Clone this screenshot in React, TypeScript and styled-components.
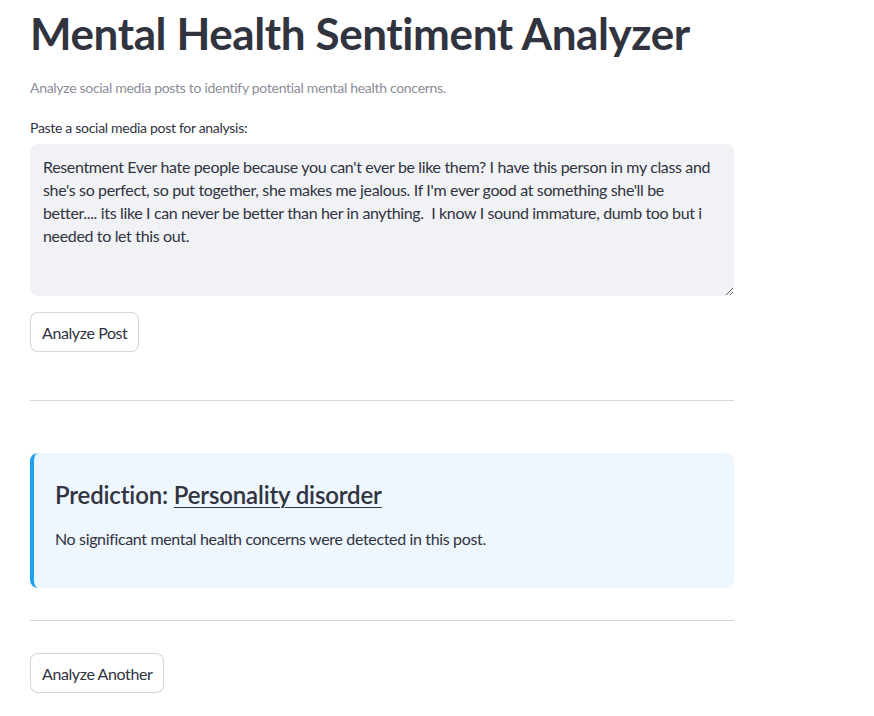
import React from "react";
import styled, { createGlobalStyle } from "styled-components";

const Global = createGlobalStyle`
  html, body { margin: 0; padding: 0; background: #ffffff; }
  body { font-family: Lato, "Noto Sans", sans-serif; color: #31333f; }
  * { box-sizing: border-box; }
`;

const Main = styled.main`
  width: 704px;
  margin-left: 30px;
  display: flex;
  flex-direction: column;
`;

const Title = styled.h1`
  margin: 0;
  padding: 7px 0 0;
  font-size: 44px;
  font-weight: 700;
  line-height: 52px;
  letter-spacing: -0.4px;
  color: #31333f;
`;

const Subtitle = styled.p`
  margin: 19px 0 0;
  font-size: 14px;
  line-height: 20px;
  letter-spacing: -0.3px;
  color: #8b8d97;
`;

const Label = styled.label`
  display: block;
  margin: 20px 0 0;
  font-size: 14px;
  line-height: 20px;
  letter-spacing: -0.3px;
  color: #31333f;
`;

const TextArea = styled.textarea`
  display: block;
  width: 704px;
  height: 152px;
  margin-top: 6px;
  padding: 11px 12px 12px 13px;
  border: none;
  border-radius: 8px;
  background: #f0f2f6;
  color: #31333f;
  font-family: Lato, "Noto Sans", sans-serif;
  font-size: 16px;
  line-height: 23px;
  letter-spacing: -0.35px;
  white-space: pre-wrap;
  resize: vertical;
  outline: none;
`;

const Button = styled.button<{ $top: number }>`
  align-self: flex-start;
  margin-top: ${(p) => p.$top}px;
  height: 40px;
  padding: 0 11px;
  background: #ffffff;
  border: 1px solid rgba(49, 51, 63, 0.2);
  border-radius: 8px;
  font-family: Lato, "Noto Sans", sans-serif;
  font-size: 16px;
  letter-spacing: -0.4px;
  color: #31333f;
  cursor: pointer;
`;

const Divider = styled.hr<{ $top: number }>`
  width: 100%;
  margin: ${(p) => p.$top}px 0 0;
  border: none;
  border-top: 1px solid #d5d6d9;
`;

const Alert = styled.section`
  margin-top: 52px;
  height: 135px;
  padding: 27px 24px 0 21px;
  background: #eef6fe;
  border-left: 4px solid #1ea1f2;
  border-radius: 8px;
`;

const AlertTitle = styled.h3`
  margin: 0;
  font-size: 24px;
  font-weight: 600;
  line-height: 30px;
  letter-spacing: -0.15px;
  color: #31333f;
`;

const Underlined = styled.span`
  text-decoration: underline;
  text-decoration-thickness: 1px;
  text-underline-offset: 3px;
`;

const AlertText = styled.p`
  margin: 17px 0 0;
  font-size: 16px;
  line-height: 24px;
  letter-spacing: -0.35px;
  color: #31333f;
`;

const post = [
  "Resentment Ever hate people because you can't ever be like them? I have this person in my class and",
  "she's so perfect, so put together, she makes me jealous. If I'm ever good at something she'll be",
  "better.... its like I can never be better than her in anything.  I know I sound immature, dumb too but i",
  "needed to let this out.",
].join("\n");

export default function App() {
  return (
    <>
      <Global />
      <Main>
        <Title>Mental Health Sentiment Analyzer</Title>
        <Subtitle>Analyze social media posts to identify potential mental health concerns.</Subtitle>
        <Label htmlFor="post">Paste a social media post for analysis:</Label>
        <TextArea id="post" defaultValue={post} />
        <Button $top={16}>Analyze Post</Button>
        <Divider $top={48} />
        <Alert>
          <AlertTitle>
            Prediction: <Underlined>Personality disorder</Underlined>
          </AlertTitle>
          <AlertText>No significant mental health concerns were detected in this post.</AlertText>
        </Alert>
        <Divider $top={32} />
        <Button $top={32}>Analyze Another</Button>
      </Main>
    </>
  );
}
